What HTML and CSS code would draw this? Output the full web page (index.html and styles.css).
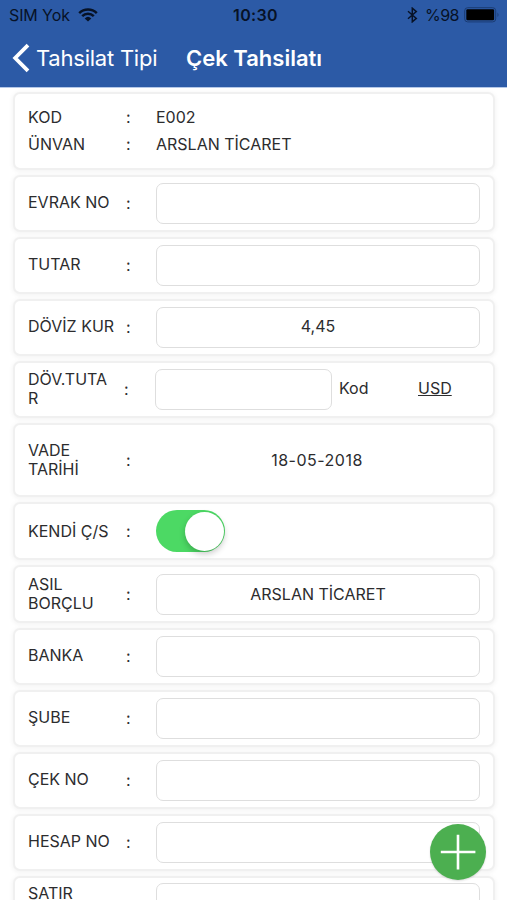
FILE: index.html
```html
<!DOCTYPE html>
<html lang="tr">
<head>
<meta charset="utf-8">
<title>Çek Tahsilatı</title>
<link rel="stylesheet" href="styles.css">
</head>
<body>
<div class="screen">
  <header class="header">
    <div class="status">
      <div class="carrier"><span>SIM Yok</span>
        <svg class="wifi" width="20" height="14" viewBox="0 0 20 14" fill="none" stroke="#071226"><path d="M1.2 5.2A12.6 12.6 0 0 1 18.8 5.2M4.2 8.2a8.3 8.3 0 0 1 11.6 0" stroke-width="2.5"/><path d="M10 13.6 6.7 10.4a4.8 4.8 0 0 1 6.6 0Z" fill="#071226" stroke="none"/></svg>
      </div>
      <div class="clock">10:30</div>
      <div class="power">
        <svg class="bluetooth" width="11" height="16" viewBox="0 0 11 16" fill="none" stroke="#071226" stroke-width="1.5"><path d="M1 4.3 9.3 11.4 5.3 14.8V1.2L9.3 4.6 1 11.7"/></svg>
        <span>%98</span>
        <svg class="battery" width="36" height="16" viewBox="0 0 36 16"><rect x=".7" y=".7" width="31" height="14.2" rx="3" fill="none" stroke="#1b3c73"/><rect x="2.3" y="2.3" width="27.8" height="11" rx="1.2" fill="#000"/><path d="M33.5 5.5q2 2.3 0 4.6Z" fill="#1b3c73"/></svg>
      </div>
    </div>
    <nav class="nav">
      <svg class="back" width="18" height="30" viewBox="0 0 18 30" fill="none" stroke="#fff" stroke-width="3.8"><path d="M16 2.2 3.2 15 16 27.8"/></svg>
      <span class="parent">Tahsilat Tipi</span>
      <h1 class="title">Çek Tahsilatı</h1>
    </nav>
  </header>
  <main class="form">
    <section class="card summary">
      <div class="line"><span class="label">KOD</span><span class="colon">:</span><span>E002</span></div>
      <div class="line"><span class="label">ÜNVAN</span><span class="colon">:</span><span>ARSLAN TİCARET</span></div>
    </section>
    <section class="card"><span class="label">EVRAK NO</span><span class="colon">:</span><div class="field"></div></section>
    <section class="card"><span class="label">TUTAR</span><span class="colon">:</span><div class="field"></div></section>
    <section class="card"><span class="label">DÖVİZ KUR</span><span class="colon">:</span><div class="field">4,45</div></section>
    <section class="card currency"><span class="label">DÖV.TUTA<br>R</span><span class="colon">:</span><div class="field"></div><span class="code">Kod</span><span class="unit">USD</span></section>
    <section class="card date"><span class="label">VADE<br>TARİHİ</span><span class="colon">:</span><div class="value">18-05-2018</div></section>
    <section class="card own"><span class="label">KENDİ Ç/S</span><span class="colon">:</span><div class="switch"><div class="knob"></div></div></section>
    <section class="card borrower"><span class="label">ASIL<br>BORÇLU</span><span class="colon">:</span><div class="field">ARSLAN TİCARET</div></section>
    <section class="card"><span class="label">BANKA</span><span class="colon">:</span><div class="field"></div></section>
    <section class="card"><span class="label">ŞUBE</span><span class="colon">:</span><div class="field"></div></section>
    <section class="card"><span class="label">ÇEK NO</span><span class="colon">:</span><div class="field"></div></section>
    <section class="card"><span class="label">HESAP NO</span><span class="colon">:</span><div class="field"></div></section>
    <section class="card last"><span class="label">SATIR</span><span class="colon"></span><div class="field"></div></section>
  </main>
  <div class="add"><svg width="56" height="56" viewBox="0 0 56 56" stroke="#fff" stroke-width="2.6"><path d="M28 10.8v34.6M10.8 28h34.6"/></svg></div>
</div>
</body>
</html>
```
FILE: styles.css
```css
* { box-sizing: border-box; }
body { margin: 0; background: #fff; }
.screen {
  position: relative;
  width: 507px;
  height: 900px;
  overflow: hidden;
  font-family: Inter, "Liberation Sans", sans-serif;
  font-size: 16px;
  line-height: 19px;
  color: #2c2c2e;
}
.header { height: 88px; background: #2c5aa6; border-bottom: 1px solid #b5c8e8; }
.status {
  display: grid;
  grid-template-columns: 1fr auto 1fr;
  align-items: center;
  height: 30px;
  padding: 0 7px 0 9px;
  color: #071226;
}
.carrier { display: flex; align-items: center; gap: 8px; letter-spacing: -.1px; }
.clock { font-weight: 600; letter-spacing: .35px; padding-left: 2px; }
.power { display: flex; align-items: center; justify-content: flex-end; letter-spacing: -.5px; }
.bluetooth { margin-right: 7px; }
.battery { margin-left: 5px; }
.nav { display: flex; align-items: center; height: 56px; padding-left: 12px; color: #fff; }
.parent { margin-left: 6px; width: 150px; font-size: 22px; line-height: 28px; letter-spacing: -.23px; white-space: nowrap; }
.title { margin: 0; font-size: 22px; line-height: 28px; font-weight: 600; white-space: nowrap; }
.form { display: flex; flex-direction: column; gap: 5px; padding: 4px 12px 0 13px; }
.card {
  display: flex;
  align-items: center;
  flex: none;
  height: 57px;
  padding: 0 13px;
  border: 2px solid #f0f0f0;
  border-radius: 7px;
  background: #fff;
  box-shadow: 0 1px 4px 1px #f5f5f5;
}
.label { width: 98px; flex: none; padding-bottom: 2px; white-space: nowrap; }
.colon { width: 30px; flex: none; }
.field {
  display: flex;
  align-items: center;
  justify-content: center;
  flex: none;
  width: 324px;
  height: 41px;
  padding-bottom: 2px;
  border: 1px solid #dedede;
  border-radius: 7px;
  background: #fff;
}
.summary { height: 78px; flex-direction: column; align-items: stretch; justify-content: center; gap: 8px; }
.summary .label { padding: 0; }
.line { display: flex; }
.currency .label { width: 96px; }
.currency .colon { width: 31px; }
.currency .field { width: 177px; }
.code { width: 79px; margin-left: 7px; padding-bottom: 2px; }
.unit { padding-bottom: 2px; text-decoration: underline; }
.date { height: 74px; }
.value { width: 322px; text-align: center; letter-spacing: .5px; }
.own { height: 58px; }
.own .label, .date .label { padding: 0; }
.borrower { height: 58px; }
.borrower .label { padding: 0; }
.borrower .field { padding: 0; }
.last { align-items: flex-start; padding-top: 5px; }
.last .label { padding-top: 1px; }
.switch {
  display: flex;
  justify-content: flex-end;
  align-items: center;
  width: 69px;
  height: 42px;
  padding-right: 1px;
  border-radius: 21px;
  background: #4cd964;
}
.knob { width: 39px; height: 39px; border-radius: 50%; background: #fff; box-shadow: 0 3px 6px rgba(0, 0, 0, .22); }
.add {
  position: absolute;
  left: 430px;
  top: 824px;
  width: 56px;
  height: 56px;
  border-radius: 50%;
  background: #4caf50;
  box-shadow: 0 1px 2px rgba(0, 0, 0, .15);
}
.add svg { display: block; }
```
